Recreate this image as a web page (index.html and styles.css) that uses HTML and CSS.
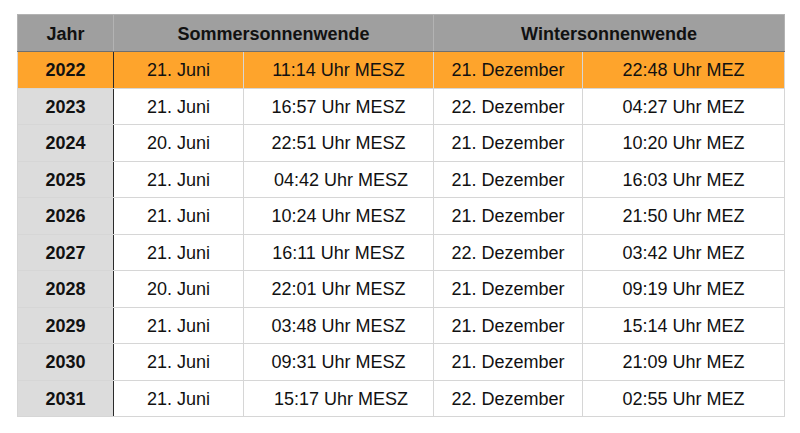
FILE: index.html
```html
<!DOCTYPE html>
<html lang="de">
<head>
<meta charset="utf-8">
<link rel="stylesheet" href="styles.css">
</head>
<body>
<table class="sun">
  <colgroup>
    <col class="c1"><col class="c2"><col class="c3"><col class="c4"><col class="c5">
  </colgroup>
  <thead>
    <tr><th>Jahr</th><th colspan="2">Sommersonnenwende</th><th colspan="2">Wintersonnenwende</th></tr>
  </thead>
  <tbody>
    <tr class="now"><td class="y">2022</td><td>21. Juni</td><td>11:14 Uhr MESZ</td><td>21. Dezember</td><td>22:48 Uhr MEZ</td></tr>
    <tr><td class="y">2023</td><td>21. Juni</td><td>16:57 Uhr MESZ</td><td>22. Dezember</td><td>04:27 Uhr MEZ</td></tr>
    <tr><td class="y">2024</td><td>20. Juni</td><td>22:51 Uhr MESZ</td><td>21. Dezember</td><td>10:20 Uhr MEZ</td></tr>
    <tr><td class="y">2025</td><td>21. Juni</td><td>&nbsp;04:42 Uhr MESZ</td><td>21. Dezember</td><td>16:03 Uhr MEZ</td></tr>
    <tr><td class="y">2026</td><td>21. Juni</td><td>10:24 Uhr MESZ</td><td>21. Dezember</td><td>21:50 Uhr MEZ</td></tr>
    <tr><td class="y">2027</td><td>21. Juni</td><td>16:11 Uhr MESZ</td><td>22. Dezember</td><td>03:42 Uhr MEZ</td></tr>
    <tr><td class="y">2028</td><td>20. Juni</td><td>22:01 Uhr MESZ</td><td>21. Dezember</td><td>09:19 Uhr MEZ</td></tr>
    <tr><td class="y">2029</td><td>21. Juni</td><td>03:48 Uhr MESZ</td><td>21. Dezember</td><td>15:14 Uhr MEZ</td></tr>
    <tr><td class="y">2030</td><td>21. Juni</td><td>09:31 Uhr MESZ</td><td>21. Dezember</td><td>21:09 Uhr MEZ</td></tr>
    <tr><td class="y">2031</td><td>21. Juni</td><td>&nbsp;15:17 Uhr MESZ</td><td>22. Dezember</td><td>02:55 Uhr MEZ</td></tr>
  </tbody>
</table>
</body>
</html>
```
FILE: styles.css
```css
html, body {
  margin: 0;
  padding: 0;
  background: #ffffff;
}
body {
  padding: 14px 0 0 17px;
  font-family: "Liberation Sans", Arial, sans-serif;
  color: #111111;
}
.sun {
  border-collapse: collapse;
  table-layout: fixed;
  width: 767px;
  font-size: 18px;
}
.c1 { width: 96px; }
.c2 { width: 130px; }
.c3 { width: 190px; }
.c4 { width: 149px; }
.c5 { width: 202px; }
.sun th, .sun td {
  padding: 2px 0 0 0;
  text-align: center;
  vertical-align: middle;
  border: 1px solid #d6d6d6;
  white-space: nowrap;
}
.sun thead th {
  background: #9f9f9f;
  font-weight: bold;
  height: 34px;
  border-color: #b3b3b3;
  border-bottom: 1px solid #6f6f6f;
}
.sun tbody td {
  height: 33.5px;
  background: #ffffff;
}
.sun tbody td.y {
  background: #dcdcdc;
  font-weight: bold;
  border-right: 1px solid #2a2a2a;
}
.sun tbody tr.now td {
  background: #fea42c;
}
```
